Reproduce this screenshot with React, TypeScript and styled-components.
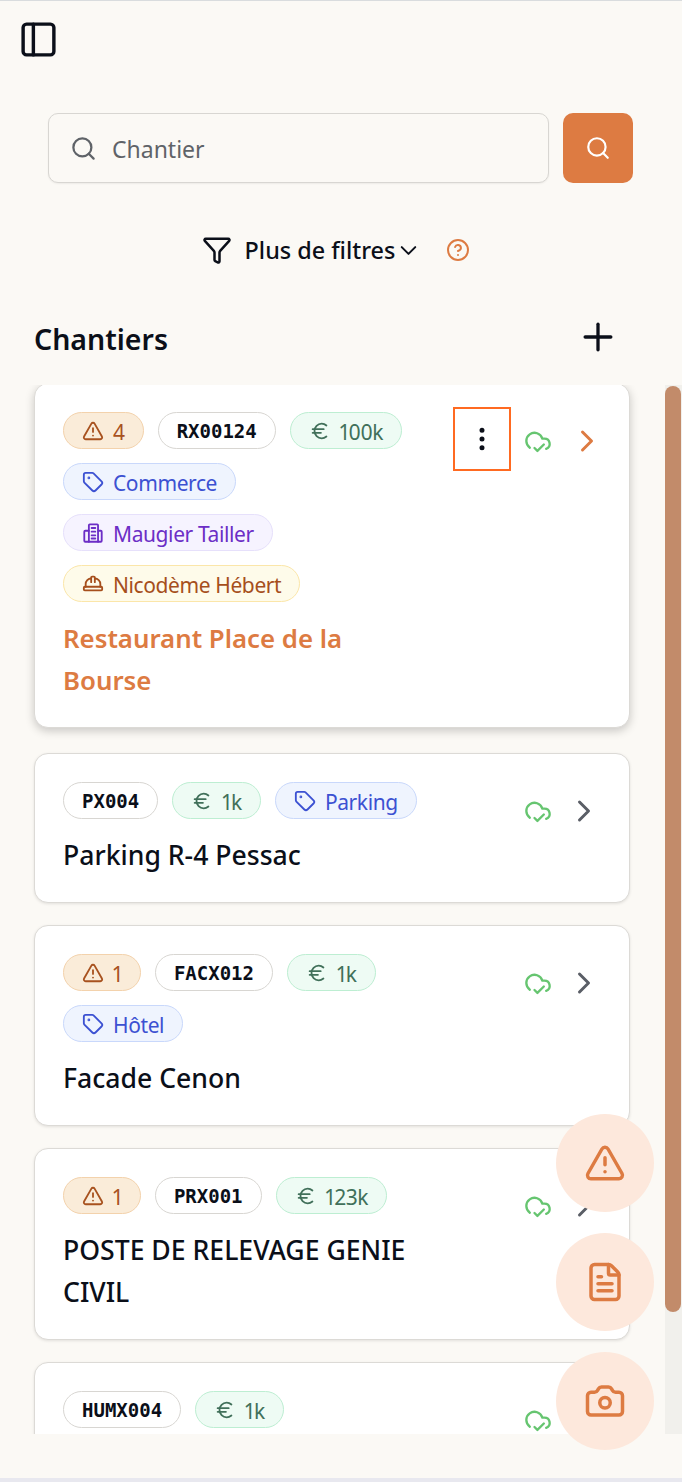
import styled, { createGlobalStyle } from 'styled-components';
import {
  Camera,
  ChevronDown,
  ChevronRight,
  CircleHelp,
  CloudCheck,
  EllipsisVertical,
  Euro,
  FileText,
  Funnel,
  HardHat,
  PanelLeft,
  Plus,
  Search,
  Tag,
  TriangleAlert,
} from 'lucide-react';

type pillKind = 'alert' | 'money' | 'tag' | 'company' | 'worker';

type siteType = {
  code: string;
  title?: string;
  alerts?: number;
  amount: string;
  tag?: string;
  company?: string;
  worker?: string;
  active?: boolean;
};

const sites: siteType[] = [
  {
    code: 'RX00124',
    title: 'Restaurant Place de la Bourse',
    alerts: 4,
    amount: '100k',
    tag: 'Commerce',
    company: 'Maugier Tailler',
    worker: 'Nicodème Hébert',
    active: true,
  },
  { code: 'PX004', title: 'Parking R-4 Pessac', amount: '1k', tag: 'Parking' },
  { code: 'FACX012', title: 'Facade Cenon', alerts: 1, amount: '1k', tag: 'Hôtel' },
  { code: 'PRX001', title: 'POSTE DE RELEVAGE GENIE CIVIL', alerts: 1, amount: '123k' },
  { code: 'HUMX004', amount: '1k' },
];

const pillColors: Record<pillKind, { bg: string; border: string; color: string }> = {
  alert: { bg: '#faecd9', border: '#f3d2ac', color: '#a8521f' },
  money: { bg: '#eefbf4', border: '#bdeed2', color: '#41705a' },
  tag: { bg: '#eff4fe', border: '#c9d8fb', color: '#3c51d2' },
  company: { bg: '#f6f3ff', border: '#e6e0fb', color: '#6c2ec6' },
  worker: { bg: '#fefbea', border: '#fbe6a9', color: '#a64f1c' },
};

function CompanyIcon() {
  return (
    <svg width='22' height='22' viewBox='0 0 24 24' fill='none' stroke='currentColor' strokeWidth='2' strokeLinejoin='round' strokeLinecap='round'>
      <path d='M7.5 21.5V3.5a1 1 0 0 1 1-1h8a1 1 0 0 1 1 1v18' />
      <path d='M7.5 9.5h-4a1 1 0 0 0-1 1v10a1 1 0 0 0 1 1h17a1 1 0 0 0 1-1v-10a1 1 0 0 0-1-1h-3' />
      <path d='M10.5 6.5h4M10.5 10.5h4M10.5 14.5h4M10.5 18h4' />
    </svg>
  );
}

function SiteCard({ site }: { site: siteType }) {
  return (
    <Card $active={site.active}>
      <CardBody>
        <Pills>
          {site.alerts !== undefined && (
            <Pill $kind='alert'>
              <TriangleAlert size={22} />
              <PillLabel>{site.alerts}</PillLabel>
            </Pill>
          )}
          <CodePill>{site.code}</CodePill>
          <Pill $kind='money'>
            <Euro size={22} />
            <PillLabel>{site.amount}</PillLabel>
          </Pill>
          {site.tag && (
            <Pill $kind='tag'>
              <Tag size={22} />
              <PillLabel>{site.tag}</PillLabel>
            </Pill>
          )}
          {site.company && (
            <Pill $kind='company'>
              <CompanyIcon />
              <PillLabel>{site.company}</PillLabel>
            </Pill>
          )}
          {site.worker && (
            <Pill $kind='worker'>
              <HardHat size={22} />
              <PillLabel>{site.worker}</PillLabel>
            </Pill>
          )}
        </Pills>
        {site.title && <CardTitle $active={site.active}>{site.title}</CardTitle>}
      </CardBody>
      <CardActions>
        {site.active && (
          <MenuButton>
            <EllipsisVertical size={30} />
          </MenuButton>
        )}
        <CloudCheck size={28} color='#66c570' strokeWidth={2} />
        <ChevronButton $active={site.active}>
          <ChevronRight size={36} />
        </ChevronButton>
      </CardActions>
    </Card>
  );
}

export default function App() {
  return (
    <>
      <GlobalStyle />
      <Page>
        <TopBar>
          <PanelLeft size={41} color='#0b0f19' strokeWidth={2} />
        </TopBar>
        <SearchRow>
          <SearchField>
            <Search size={27} color='#5f6368' />
            <Placeholder>Chantier</Placeholder>
          </SearchField>
          <SearchButton>
            <Search size={26} color='#fff' />
          </SearchButton>
        </SearchRow>
        <FilterRow>
          <FilterToggle>
            <Funnel size={30} strokeWidth={2} />
            <FilterLabel>Plus de filtres</FilterLabel>
            <ChevronDown size={27} strokeWidth={1.8} />
          </FilterToggle>
          <CircleHelp size={24} color='#dd7b42' />
        </FilterRow>
        <SectionHeader>
          <SectionTitle>Chantiers</SectionTitle>
          <Plus size={44} color='#0b0f19' strokeWidth={1.8} />
        </SectionHeader>
        <ListArea>
          <SiteList>
            {sites.map((site) => (
              <SiteCard key={site.code} site={site} />
            ))}
          </SiteList>
          <ScrollRail>
            <ScrollThumb />
          </ScrollRail>
        </ListArea>
        <Fabs>
          <Fab>
            <TriangleAlert size={42} />
          </Fab>
          <Fab>
            <FileText size={42} />
          </Fab>
          <Fab>
            <Camera size={42} />
          </Fab>
        </Fabs>
      </Page>
    </>
  );
}

const GlobalStyle = createGlobalStyle`
  html, body {
    margin: 0;
    padding: 0;
    height: 100%;
    overflow: hidden;
    background: #fbf9f5;
  }
  * {
    box-sizing: border-box;
  }
`;

const Page = styled.div`
  position: relative;
  width: 682px;
  height: 1482px;
  display: flex;
  flex-direction: column;
  overflow: hidden;
  border-top: 1px solid #d9dcde;
  border-bottom: 4px solid #e8e8ef;
  background: #fbf9f5;
  color: #0b0f19;
  font-family: 'Noto Sans', 'Liberation Sans', sans-serif;
`;

const TopBar = styled.div`
  height: 112px;
  flex: none;
  padding: 18px 0 0 18px;
`;

const SearchRow = styled.div`
  display: flex;
  flex: none;
  gap: 14px;
  padding: 0 49px 0 48px;
`;

const SearchField = styled.div`
  flex: 1;
  height: 70px;
  display: flex;
  align-items: center;
  gap: 15px;
  padding-left: 21px;
  background: #fbf9f5;
  border: 1px solid #d8d6d2;
  border-radius: 10px;
  box-shadow: 0 1px 2px rgba(0, 0, 0, 0.06);
  color: #5f6368;
  font-size: 23px;
`;

const Placeholder = styled.span`
  padding-top: 2px;
`;

const SearchButton = styled.button`
  width: 70px;
  height: 70px;
  display: flex;
  align-items: center;
  justify-content: center;
  border: none;
  border-radius: 10px;
  background: #dd7b42;
`;

const FilterRow = styled.div`
  height: 134px;
  flex: none;
  display: flex;
  align-items: center;
  justify-content: center;
  gap: 24px;
  padding-right: 10px;
`;

const FilterToggle = styled.div`
  display: flex;
  align-items: center;
`;

const FilterLabel = styled.span`
  margin-left: 13px;
  font-size: 23.4px;
  font-weight: 500;
`;

const SectionHeader = styled.div`
  height: 70px;
  flex: none;
  margin-top: -15px;
  display: flex;
  align-items: center;
  justify-content: space-between;
  padding: 0 62px 0 34px;
`;

const SectionTitle = styled.h2`
  margin: 4px 0 0;
  font-size: 28.5px;
  font-weight: 600;
`;

const ListArea = styled.div`
  height: 1049px;
  flex: none;
  margin-top: 13px;
  display: flex;
`;

const SiteList = styled.div`
  flex: 1;
  min-width: 0;
  padding: 0 35px 0 34px;
  display: flex;
  flex-direction: column;
  gap: 22px;
  overflow: hidden;
`;

const ScrollRail = styled.div`
  width: 17px;
  flex: none;
  padding: 1px 1px 0 0;
  background: #f1f0ec;
`;

const ScrollThumb = styled.div`
  height: 926px;
  border-radius: 8px;
  background: #c28b6a;
`;

const Card = styled.div<{ $active?: boolean }>`
  flex: none;
  display: flex;
  justify-content: space-between;
  min-height: 150px;
  padding: 28px 28px 26px;
  background: #fff;
  border: 1px solid #dcdad6;
  border-radius: 14px;
  box-shadow: ${({ $active }) =>
    $active ? '0 3px 10px rgba(0, 0, 0, 0.2)' : '0 1px 3px rgba(0, 0, 0, 0.1)'};
  margin-bottom: ${({ $active }) => ($active ? '3px' : '0')};
  /* the list is scrolled by a hair, the first card slips under its top edge */
  &:first-child {
    margin-top: -2px;
  }
`;

const CardBody = styled.div`
  width: 372px;
  display: flex;
  flex-direction: column;
`;

const Pills = styled.div`
  display: flex;
  flex-wrap: wrap;
  gap: 14px;
`;

const Pill = styled.span<{ $kind: pillKind }>`
  height: 37px;
  display: inline-flex;
  align-items: center;
  gap: 9px;
  padding: 0 18px;
  border-radius: 19px;
  font-size: 21px;
  letter-spacing: -0.4px;
  font-variant-numeric: proportional-nums;
  background: ${({ $kind }) => pillColors[$kind].bg};
  border: 1px solid ${({ $kind }) => pillColors[$kind].border};
  color: ${({ $kind }) => pillColors[$kind].color};
`;

const PillLabel = styled.span`
  padding-top: 2px;
`;

const CodePill = styled.span`
  height: 37px;
  display: inline-flex;
  align-items: center;
  padding: 0 18px;
  border-radius: 19px;
  background: #fff;
  border: 1px solid #d8d6d2;
  font-family: 'DejaVu Sans Mono', 'Liberation Mono', monospace;
  font-size: 19px;
  font-weight: 700;
`;

const CardTitle = styled.div<{ $active?: boolean }>`
  margin-top: 15px;
  font-size: ${({ $active }) => ($active ? '25.8px' : '26.6px')};
  line-height: 42px;
  font-weight: ${({ $active }) => ($active ? 600 : 500)};
  color: ${({ $active }) => ($active ? '#dd7b42' : '#0b0f19')};
`;

const CardActions = styled.div`
  display: flex;
  align-items: center;
  align-self: flex-start;
  gap: 14px;
  height: 58px;
  margin-right: -1px;
`;

const MenuButton = styled.button`
  width: 58px;
  height: 64px;
  margin: 0 -1px 5px 0;
  display: flex;
  align-items: center;
  justify-content: center;
  padding: 0;
  background: none;
  border: 2px solid #ff6a21;
  color: #0b0f19;
`;

const ChevronButton = styled.span<{ $active?: boolean }>`
  display: flex;
  margin: ${({ $active }) => ($active ? '0 -3px 0 3px' : '0')};
  color: ${({ $active }) => ($active ? '#dd7b42' : '#5a5e66')};
`;

const Fabs = styled.div`
  position: absolute;
  left: 556px;
  top: 1113px;
  display: flex;
  flex-direction: column;
  gap: 21px;
`;

const Fab = styled.button`
  width: 98px;
  height: 98px;
  display: flex;
  align-items: center;
  justify-content: center;
  padding: 0;
  border: none;
  border-radius: 50%;
  background: #fde8dc;
  color: #dd7b42;
`;
